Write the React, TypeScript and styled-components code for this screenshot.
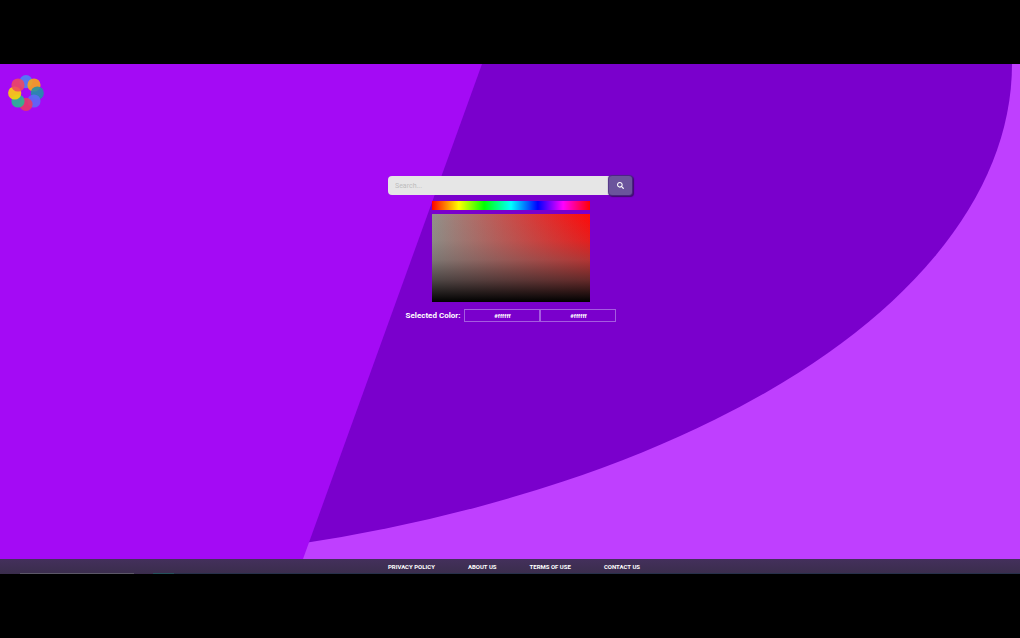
import React, { useState } from "react";
import styled, { createGlobalStyle } from "styled-components";
import { FaSearch } from "react-icons/fa";

const GlobalStyle = createGlobalStyle`
  *, *::before, *::after { box-sizing: border-box; }
  body {
    margin: 0;
    background: #000;
    color: #fff;
    font-family: Roboto, "Liberation Sans", sans-serif;
  }
`;

const Page = styled.div`
  display: flex;
  flex-direction: column;
  min-height: 100vh;
  padding: 64px 0;
`;

const Hero = styled.div`
  flex: 1;
  display: grid;
  background: #bf3fff;
  > * { grid-area: 1 / 1; }
`;

const Backdrop = styled.svg`
  display: block;
  width: 100%;
  height: 100%;
  min-height: 0;
  contain: size;
`;

const Content = styled.div`
  z-index: 1;
  display: flex;
  flex-direction: column;
`;

const Header = styled.header`
  padding: 10px 7px;
`;

const HomeLink = styled.a`
  display: block;
  width: 38px;
  height: 38px;
`;

const Main = styled.main`
  display: flex;
  flex-direction: column;
  align-items: center;
  padding: 54px 16px 16px;
`;

const SearchForm = styled.form`
  display: flex;
  width: 244px;
  height: 19px;
  border-radius: 4px;
  background: #e6e6e6;
`;

const SearchInput = styled.input`
  flex: 1;
  min-width: 0;
  padding: 0 7px;
  border: 0;
  border-radius: 4px 0 0 4px;
  background: transparent;
  color: #555;
  font: 7px Roboto, sans-serif;
  &::placeholder { color: #bdbdbd; opacity: 1; }
`;

const SearchButton = styled.button`
  display: grid;
  place-items: center;
  width: 23px;
  padding: 0;
  border: 0;
  border-radius: 3px;
  background: #6b549c;
  box-shadow: 0 0 1px 1px #4a2a80, 1px 1px 1px 1px rgba(40, 10, 70, 0.7);
  color: #fff;
  font-size: 7px;
`;

const PickerPanel = styled.div`
  display: flex;
  flex-direction: column;
  align-items: center;
  gap: 7px;
  padding: 6px 0 0 2px;
`;

const Picker = styled.div`
  display: grid;
  gap: 4px;
  width: 158px;
`;

const HueSlider = styled.input`
  appearance: none;
  width: 100%;
  height: 9px;
  margin: 0;
  background: linear-gradient(90deg, #f00, #ff0 17%, #0f0 33%, #0ff 50%, #00f 67%, #f0f 83%, #f00);
  &::-webkit-slider-thumb { appearance: none; width: 0; height: 0; }
`;

const ShadeArea = styled.div`
  height: 88px;
  background:
    linear-gradient(
      180deg,
      rgba(130, 122, 118, 0) 0%,
      rgba(122, 114, 110, 0.2) 30%,
      rgba(104, 94, 92, 0.5) 52%,
      rgba(58, 50, 50, 0.78) 75%,
      rgba(14, 12, 12, 0.96) 94%,
      #000 100%
    ),
    linear-gradient(90deg, #92918a, #ff0a0a);
`;

const SelectedRow = styled.div`
  display: flex;
  align-items: center;
`;

const SelectedLabel = styled.label`
  margin-right: 4px;
  font-size: 8px;
  line-height: 12px;
  font-weight: 700;
`;

const ColorField = styled.input`
  width: 76px;
  height: 13px;
  padding: 0;
  border: 1px solid #a55ce0;
  background: transparent;
  color: #fff;
  font: 700 6px Roboto, sans-serif;
  text-align: center;
`;

const Footer = styled.footer`
  display: flex;
  justify-content: center;
  align-items: center;
  gap: 33px;
  height: 15px;
  padding-left: 8px;
  background:
    linear-gradient(90deg, transparent 20px, #5c5868 20px 134px, transparent 134px 153px, #24525c 153px 174px, #28304a 174px) bottom / 100% 1px no-repeat,
    linear-gradient(180deg, #44305c, #3a2d4c);
`;

const FooterLink = styled.a`
  color: #fff;
  font-size: 6px;
  line-height: 8px;
  font-weight: 700;
  text-decoration: none;
  text-transform: uppercase;
`;

const petals = ["#4a86f5", "#fba616", "#1f93a8", "#5c6cf5", "#e83a62", "#24bd92", "#ffd505", "#ee4a60"];

const Logo = () => (
  <svg viewBox="-19 -19 38 38" width="38" height="38" aria-hidden="true">
    {petals.map((fill, i) => (
      <circle key={fill} cy={-11.3} r={6.6} fill={fill} fillOpacity={0.88} transform={`rotate(${i * 45})`} />
    ))}
  </svg>
);

const footerLinks = ["Privacy Policy", "About Us", "Terms of Use", "Contact Us"];

export default function App() {
  const [hue, setHue] = useState("0");
  const [query, setQuery] = useState("");
  const [first, setFirst] = useState("#ffffff");
  const [second, setSecond] = useState("#ffffff");

  return (
    <>
      <GlobalStyle />
      <Page>
        <Hero>
          <Backdrop viewBox="0 0 1020 495" preserveAspectRatio="none" aria-hidden="true">
            <ellipse cx="0" cy="0" rx="1012" ry="502.5" fill="#7a00cc" />
            <path d="M0 0H482L303 495H0Z" fill="#a40af5" />
          </Backdrop>
          <Content>
            <Header>
              <HomeLink href="#" aria-label="Home">
                <Logo />
              </HomeLink>
            </Header>
            <Main>
              <SearchForm role="search" onSubmit={(e) => e.preventDefault()}>
                <SearchInput
                  aria-label="Search"
                  placeholder="Search..."
                  value={query}
                  onChange={(e) => setQuery(e.target.value)}
                />
                <SearchButton type="submit" aria-label="Submit search">
                  <FaSearch />
                </SearchButton>
              </SearchForm>
              <PickerPanel>
                <Picker>
                  <HueSlider
                    type="range"
                    min="0"
                    max="360"
                    aria-label="Hue"
                    value={hue}
                    onChange={(e) => setHue(e.target.value)}
                  />
                  <ShadeArea />
                </Picker>
                <SelectedRow>
                  <SelectedLabel htmlFor="first-color">Selected Color:</SelectedLabel>
                  <ColorField id="first-color" value={first} onChange={(e) => setFirst(e.target.value)} />
                  <ColorField aria-label="Second color" value={second} onChange={(e) => setSecond(e.target.value)} />
                </SelectedRow>
              </PickerPanel>
            </Main>
          </Content>
        </Hero>
        <Footer>
          {footerLinks.map((label) => (
            <FooterLink key={label} href="#">{label}</FooterLink>
          ))}
        </Footer>
      </Page>
    </>
  );
}
